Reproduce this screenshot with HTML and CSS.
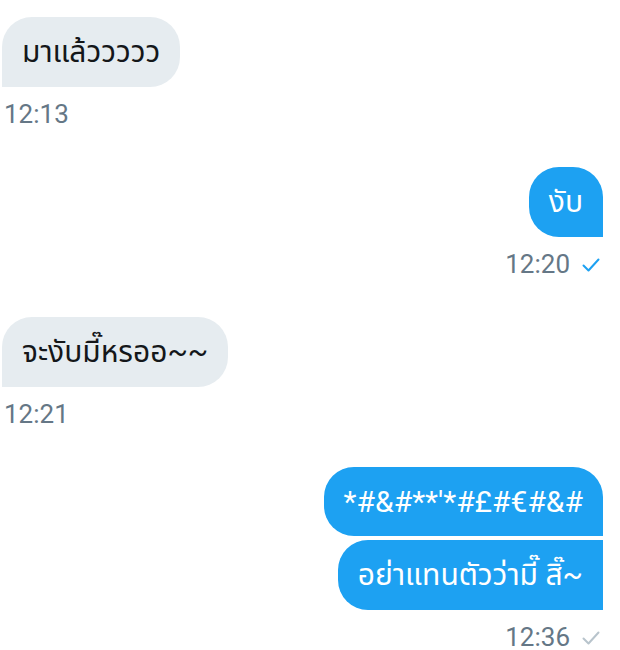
FILE: index.html
```html
<!DOCTYPE html>
<html lang="th">
<head>
<meta charset="utf-8">
<link rel="stylesheet" href="styles.css">
</head>
<body>
<div class="chat">
  <div class="group in">
    <div class="bubble in-single">มาแล้ววววว</div>
    <div class="time">12:13</div>
  </div>
  <div class="group out">
    <div class="bubble out-single">งับ</div>
    <div class="time">12:20<svg class="check read" viewBox="0 0 18 14" width="18" height="14"><path d="M1.5 7.5 L6.5 12.5 L16.5 1.5" fill="none" stroke="currentColor" stroke-width="2" stroke-linecap="round" stroke-linejoin="round"/></svg></div>
  </div>
  <div class="group in">
    <div class="bubble in-single">จะงับมี๊หรออ~~</div>
    <div class="time">12:21</div>
  </div>
  <div class="group out">
    <div class="bubble out-first">*#&amp;#**'*#£#€#&amp;#</div>
    <div class="bubble out-last">อย่าแทนตัวว่ามี๊ สิ๊~</div>
    <div class="time">12:36<svg class="check" viewBox="0 0 18 14" width="18" height="14"><path d="M1.5 7.5 L6.5 12.5 L16.5 1.5" fill="none" stroke="currentColor" stroke-width="2" stroke-linecap="round" stroke-linejoin="round"/></svg></div>
  </div>
</div>
</body>
</html>
```
FILE: styles.css
```css
html, body {
  margin: 0;
  padding: 0;
  background: #ffffff;
}
body {
  font-family: Roboto, "Noto Sans", "Noto Sans Thai", sans-serif;
  width: 620px;
  height: 650px;
  overflow: hidden;
}
.chat {
  display: flex;
  flex-direction: column;
  padding: 17px 17px 0 2px;
  gap: 38px;
}
.group {
  display: flex;
  flex-direction: column;
  gap: 4px;
}
.group.in { align-items: flex-start; }
.group.out { align-items: flex-end; }
.bubble {
  font-size: 30px;
  line-height: 30px;
  height: 30px;
  padding: 20px;
  border-radius: 30px;
  white-space: nowrap;
}
.in-single {
  background: #e6ecf0;
  color: #14171a;
  border-bottom-left-radius: 0;
}
.out-single, .out-first, .out-last {
  background: #1da1f2;
  color: #ffffff;
}
.out-single { border-bottom-right-radius: 0; }
.out-first { border-bottom-right-radius: 0; height: 29px; }
.out-last { border-top-right-radius: 0; border-bottom-right-radius: 0; }
.time {
  display: flex;
  align-items: center;
  height: 30px;
  margin-top: 8px;
  font-size: 26px;
  line-height: 30px;
  color: #657786;
  padding-left: 2px;
}
.group.out .time { padding-right: 3px; }
.check {
  color: #b8c4cc;
  margin-left: 12px;
  margin-top: 2px;
}
.check.read { color: #1da1f2; }
```
